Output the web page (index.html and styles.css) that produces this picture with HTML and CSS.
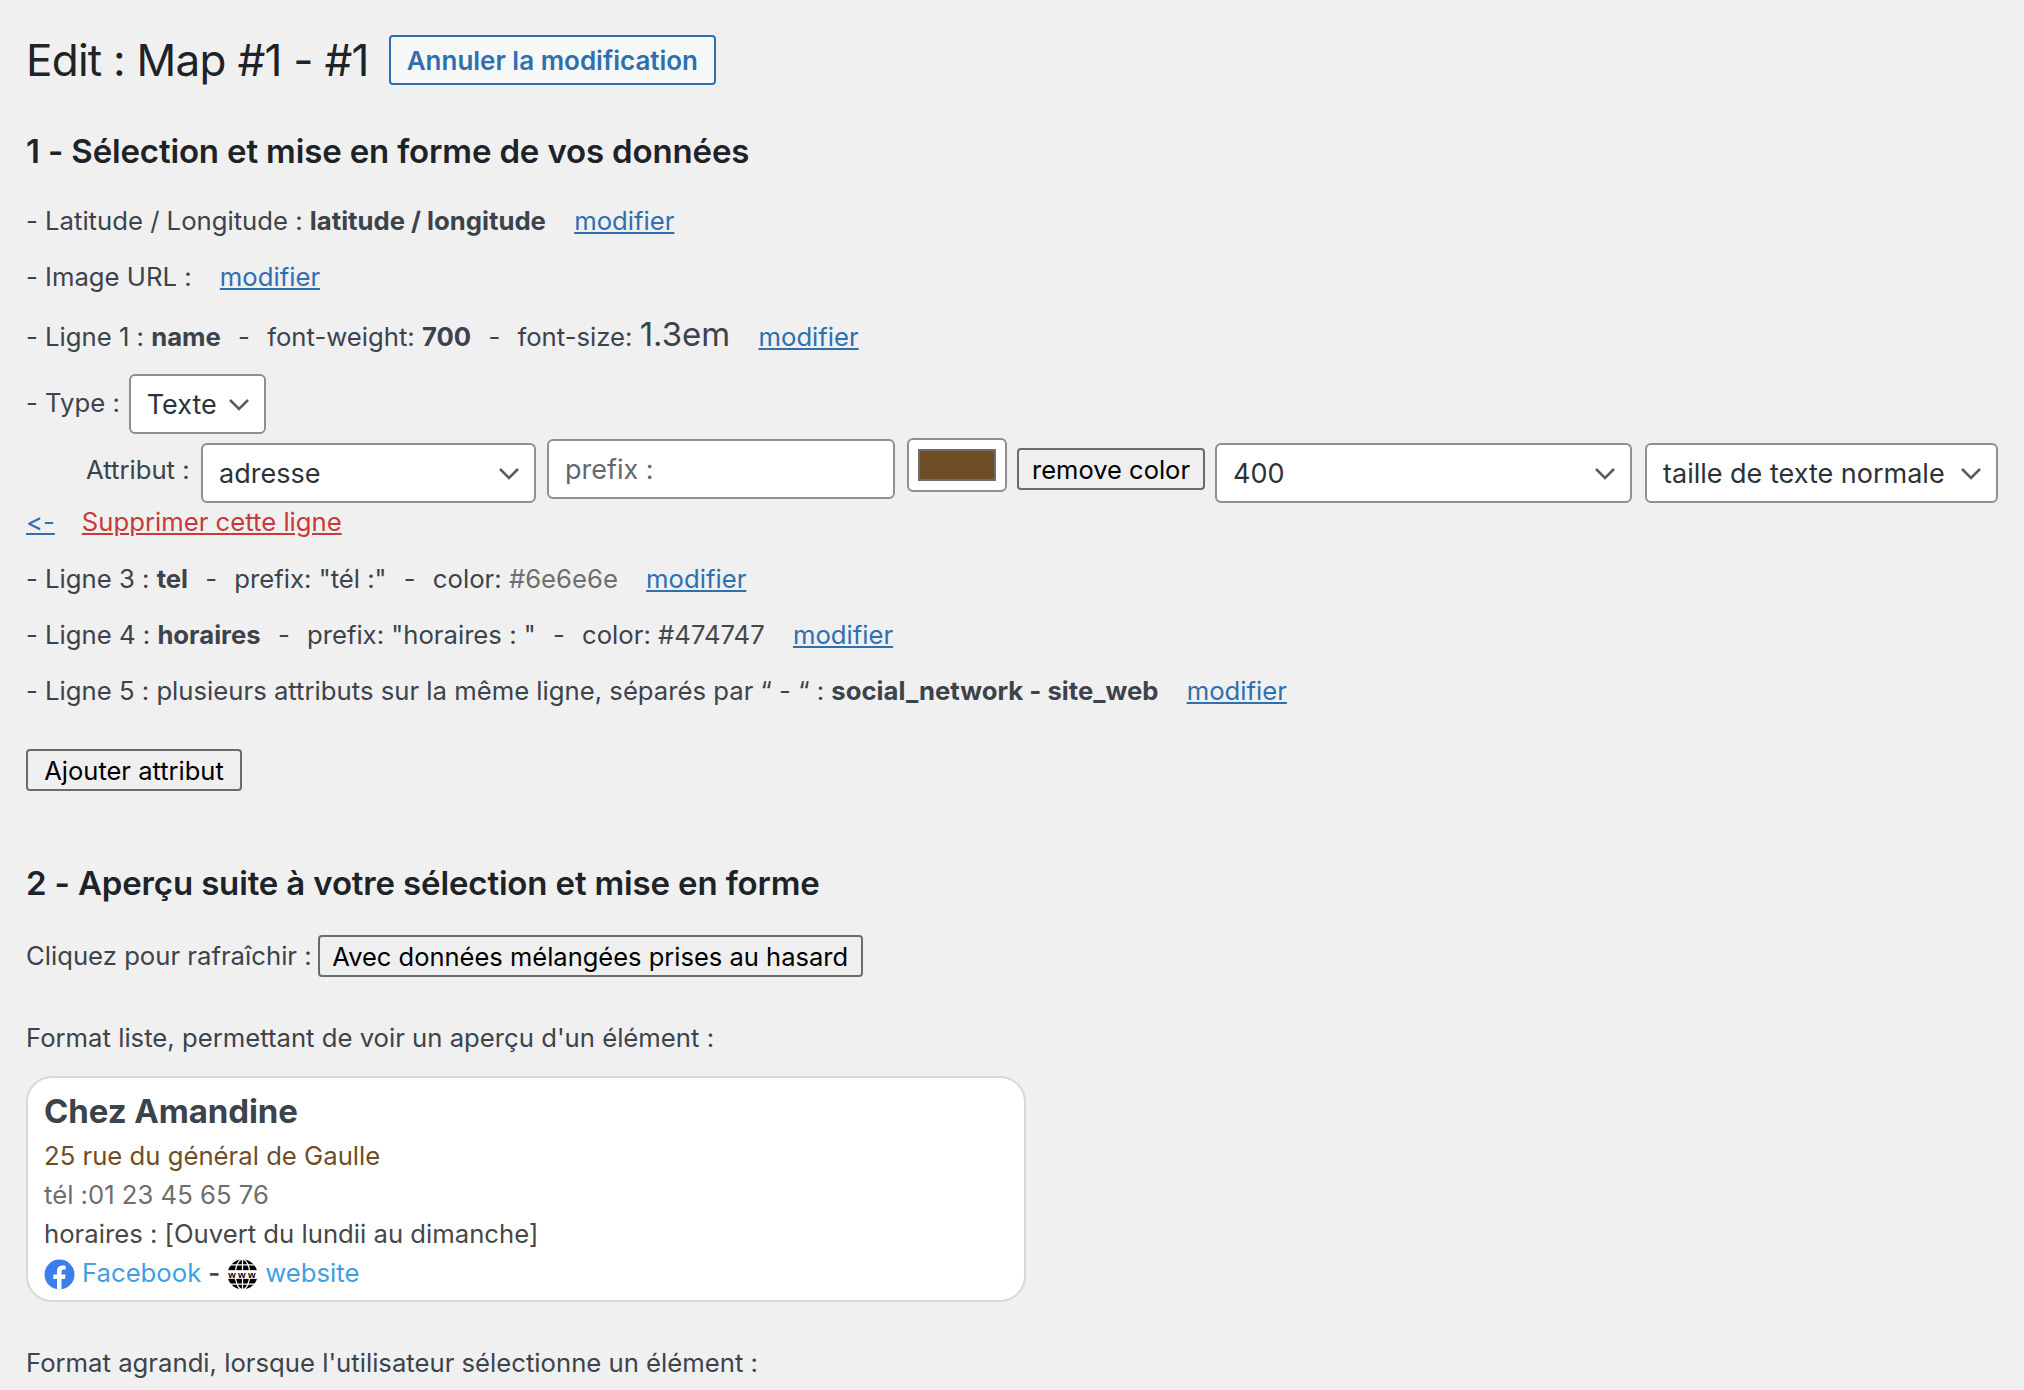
FILE: index.html
```html
<!DOCTYPE html>
<html lang="fr">
<head>
<meta charset="utf-8">
<title>Edit : Map #1 - #1</title>
<link rel="stylesheet" href="styles.css">
</head>
<body>
<main class="wrap">
  <header class="head">
    <h1 class="title">Edit : Map #1 - #1</h1>
    <a class="action" href="#">Annuler la modification</a>
  </header>

  <h2 class="section first">1 - Sélection et mise en forme de vos données</h2>
  <p class="line l-lat">- Latitude / Longitude : <b>latitude / longitude</b> <a class="edit" href="#">modifier</a></p>
  <p class="line l-img">- Image URL : <a class="edit" href="#">modifier</a></p>
  <p class="line l-one">- Ligne 1 : <b>name</b> <span class="sep">-</span> font-weight: <b>700</b> <span class="sep">-</span> font-size: <span class="big">1.3em</span> <a class="edit" href="#">modifier</a></p>

  <div class="type-row">
    <span class="type-label">- Type :</span>
    <select class="field type-select"><option>Texte</option></select>
  </div>

  <div class="attr-row">
    <label class="attr-label">Attribut :</label>
    <select class="field attr-select"><option>adresse</option></select>
    <input class="field prefix" type="text" placeholder="prefix :">
    <button class="swatch" type="button"><span class="swatch-fill"></span></button>
    <button class="btn remove" type="button">remove color</button>
    <select class="field weight"><option>400</option></select>
    <select class="field size"><option>taille de texte normale</option></select>
  </div>

  <p class="back-row"><a class="edit back" href="#">&lt;-</a><a class="delete" href="#">Supprimer cette ligne</a></p>

  <p class="line l-3">- Ligne 3 : <b>tel</b> <span class="sep">-</span> prefix: "tél :" <span class="sep">-</span> color: <span class="grey">#6e6e6e</span> <a class="edit" href="#">modifier</a></p>
  <p class="line l-4">- Ligne 4 : <b>horaires</b> <span class="sep">-</span> prefix: "horaires : " <span class="sep">-</span> color: <span class="dark">#474747</span> <a class="edit" href="#">modifier</a></p>
  <p class="line l-5">- Ligne 5 : plusieurs attributs sur la même ligne, séparés par “ - “ : <b>social_network - site_web</b> <a class="edit" href="#">modifier</a></p>

  <button class="btn add" type="button">Ajouter attribut</button>

  <h2 class="section second">2 - Aperçu suite à votre sélection et mise en forme</h2>

  <div class="refresh">
    <span>Cliquez pour rafraîchir :</span>
    <button class="btn refresh-btn" type="button">Avec données mélangées prises au hasard</button>
  </div>

  <p class="line l-list">Format liste, permettant de voir un aperçu d'un élément :</p>

  <article class="card">
    <div class="card-name">Chez Amandine</div>
    <div class="card-line addr">25 rue du général de Gaulle</div>
    <div class="card-line tel">tél :01 23 45 65 76</div>
    <div class="card-line hours">horaires : [Ouvert du lundii au dimanche]</div>
    <div class="card-line social">
      <svg class="ico" viewBox="0 0 32 32" aria-hidden="true"><defs><clipPath id="c"><circle cx="16" cy="16" r="15.5"/></clipPath></defs><circle cx="16" cy="16" r="15.5" fill="#3b7ded"/><path clip-path="url(#c)" fill="#fff" d="M13.4 32V20.6H9.6v-4.6h3.8v-3.4c0-3.9 2.3-6 5.8-6 1.7 0 3.2.3 3.2.3v3.9h-1.9c-1.9 0-2.4 1.2-2.4 2.4V16h4.2l-.7 4.6h-3.5V32z"/></svg>
      <a class="soc" href="#">Facebook</a> <span class="dash">-</span>
      <svg class="ico" viewBox="0 0 32 32" aria-hidden="true"><circle cx="16" cy="16" r="15.5" fill="#000"/><g fill="none" stroke="#fff" stroke-width="1.3"><ellipse cx="16" cy="16" rx="7.5" ry="15.5"/><path d="M16 0v12M16 20v12M3 6h26M3 26h26"/></g><rect x="0" y="11.5" width="32" height="9" fill="#fff"/><text class="www" x="16.5" y="20" text-anchor="middle">www</text></svg>
      <a class="soc" href="#">website</a>
    </div>
  </article>

  <p class="line l-big">Format agrandi, lorsque l'utilisateur sélectionne un élément :</p>
</main>
</body>
</html>
```

FILE: styles.css
```css
* { box-sizing: border-box; }
html, body { margin: 0; padding: 0; }
body {
  background: #f0f0f1;
  color: #3c434a;
  font-family: Inter, "Liberation Sans", sans-serif;
  font-size: 25.7px;
  line-height: 30px;
  font-variant-ligatures: none;
  font-feature-settings: "calt" 0;
}
.wrap { padding: 34px 0 0 26px; }
.head { display: flex; align-items: center; gap: 20px; height: 52px; }
.title { margin: 0; font-size: 44px; line-height: 52px; font-weight: 400; color: #1d2327; letter-spacing: -0.75px; }
.action {
  display: flex; align-items: center; height: 50px; padding: 2px 16px 0;
  border: 2px solid #2f6fae; border-radius: 4px; background: #f6f7f7;
  color: #2f6fae; font-size: 26px; font-weight: 600; text-decoration: none;
}
.section { margin: 0; font-size: 33px; line-height: 40px; font-weight: 600; color: #1d2327; letter-spacing: -0.15px; }
.first { margin-top: 45px; }
.second { margin-top: 72px; }
.line { margin: 0; }
.l-lat { margin-top: 35px; }
.l-img { margin-top: 26px; }
.l-one { margin-top: 27px; }
b { font-weight: 700; }
.sep { margin: 0 10px; }
.big { font-size: 33px; }
.edit { color: #2f6fae; margin-left: 21px; }
.grey { color: #6e6e6e; }
.dark { color: #474747; }
.type-row { display: flex; align-items: center; gap: 9px; margin-top: 22px; }
.type-label { margin-top: -3px; }
.field {
  height: 60px; margin: 0; padding: 0 16px;
  border: 2px solid #8c8f94; border-radius: 6px;
  background-color: #fff; color: #2c3338;
  font-family: inherit; font-size: 27px;
  font-variant-ligatures: none;
}
select.field {
  appearance: none;
  background-image: url("data:image/svg+xml,%3Csvg xmlns='http://www.w3.org/2000/svg' width='22' height='14' viewBox='0 0 22 14'%3E%3Cpath d='M2 3l9 9 9-9' fill='none' stroke='%23555d66' stroke-width='2.6'/%3E%3C/svg%3E");
  background-repeat: no-repeat;
  background-position: right 14px center;
}
.type-select { width: 137px; }
.attr-row { display: flex; align-items: flex-start; margin-top: 9px; padding-left: 60px; }
.attr-label { width: 115px; margin-top: 12px; }
.attr-select { width: 335px; }
.prefix { width: 348px; margin: -4px 0 0 11px; }
.prefix::placeholder { color: #646970; opacity: 1; }
.swatch {
  width: 100px; height: 54px; margin: -5px 0 0 12px; padding: 9px;
  border: 2px solid #8c8f94; border-radius: 6px; background: #fff; display: flex;
}
.swatch-fill { flex: 1; background: #6f4e27; border: 2px solid #6e6e6e; }
.btn {
  height: 42px; padding: 2px 15px 0;
  border: 2px solid #6b6b6b; border-radius: 4px; background: #efefef;
  color: #000; font-family: inherit; font-size: 25.5px; line-height: 1;
}
.remove { margin: 5px 0 0 10px; width: 188px; padding: 2px 0 0; }
.weight { width: 417px; margin-left: 10px; }
.size { width: 353px; margin-left: 13px; }
.back-row { margin: 4px 0 0; }
.back { margin-left: 0; }
.delete { color: #c83a3a; margin-left: 27px; }
.l-3 { margin-top: 27px; }
.l-4 { margin-top: 26px; }
.l-5 { margin-top: 26px; }
.add { display: block; margin-top: 43px; width: 216px; padding: 2px 0 0; }
.refresh { display: flex; align-items: center; gap: 6px; margin-top: 32px; }
.refresh-btn { width: 545px; padding: 2px 0 0; }
.l-list { margin-top: 46px; }
.card {
  width: 1000px; height: 226px; margin-top: 23px; padding: 13px 16px 0;
  background: #fff; border: 2px solid #d5d8dc; border-radius: 26px;
}
.card-name { font-size: 33px; line-height: 40px; font-weight: 700; letter-spacing: -0.1px; }
.card-line { line-height: 39px; }
.card-name + .card-line { margin-top: 5px; }
.addr { color: #6f4e27; }
.tel { color: #6e6e6e; }
.hours { color: #474747; }
.social { display: flex; align-items: center; gap: 7px; }
.dash { font-weight: 600; color: #474747; }
.ico { width: 31px; height: 31px; flex: none; margin-top: 3px; }
.www { font: 700 10px "Liberation Sans", sans-serif; letter-spacing: 2.4px; fill: #000; }
.soc { color: #3f9fe3; text-decoration: none; }
.l-big { margin-top: 46px; }
```
